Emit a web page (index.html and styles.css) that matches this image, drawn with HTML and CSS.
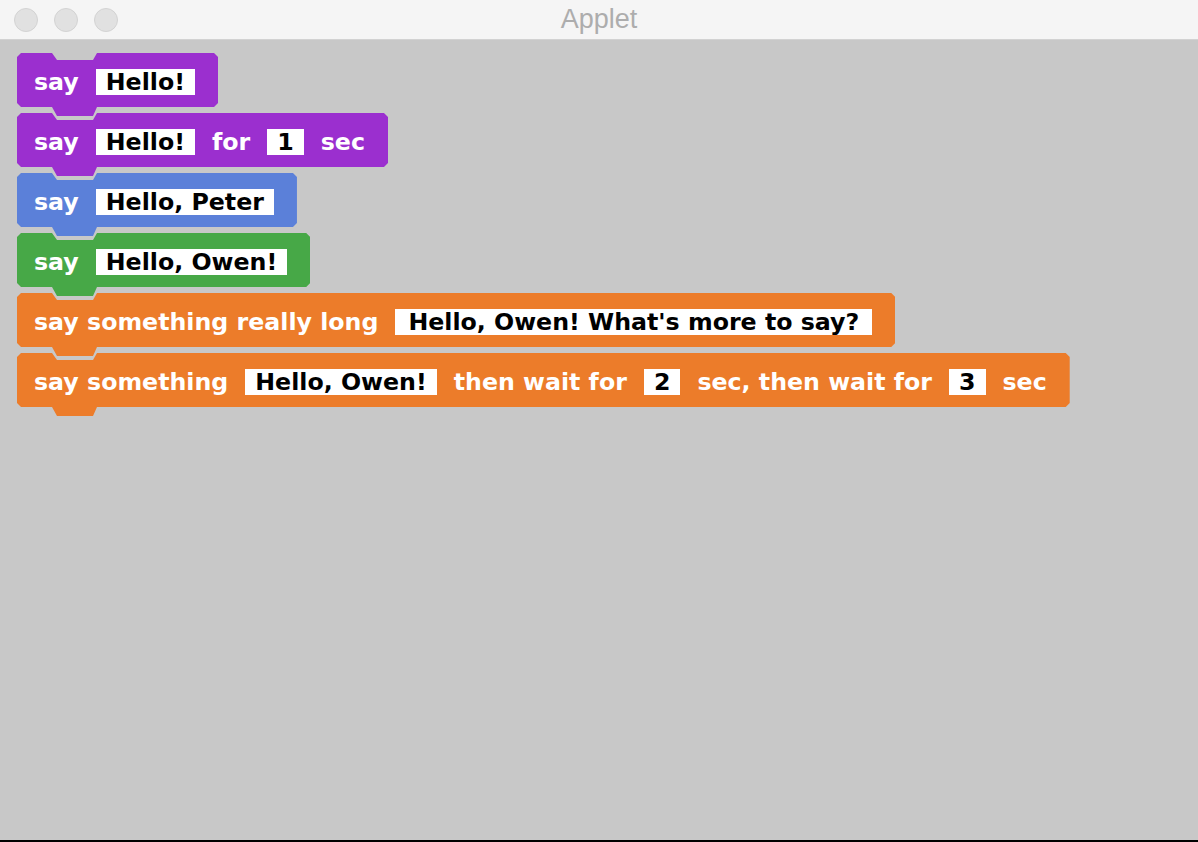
FILE: index.html
```html
<!DOCTYPE html>
<html>
<head>
<meta charset="utf-8">
<title>Applet</title>
<link rel="stylesheet" href="styles.css">
</head>
<body>
<div class="window">
  <div class="titlebar">
    <div class="lights"><span class="light"></span><span class="light"></span><span class="light"></span></div>
    <div class="title">Applet</div>
    <div class="spacer"></div>
  </div>
  <div class="canvas">
    <div class="block purple"><span class="lbl">say</span><span class="inp">Hello!</span></div>
    <div class="block purple"><span class="lbl">say</span><span class="inp">Hello!</span><span class="lbl">for</span><span class="inp">1</span><span class="lbl">sec</span></div>
    <div class="block blue"><span class="lbl">say</span><span class="inp">Hello, Peter</span></div>
    <div class="block green"><span class="lbl">say</span><span class="inp">Hello, Owen!</span></div>
    <div class="block orange"><span class="lbl">say something really long</span><span class="inp wide">Hello, Owen! What's more to say?</span></div>
    <div class="block orange"><span class="lbl">say something</span><span class="inp">Hello, Owen!</span><span class="lbl">then wait for</span><span class="inp">2</span><span class="lbl">sec, then wait for</span><span class="inp">3</span><span class="lbl">sec</span></div>
  </div>
</div>
</body>
</html>
```
FILE: styles.css
```css
html, body {
  margin: 0;
  padding: 0;
  width: 1198px;
  height: 842px;
  overflow: hidden;
}
.window {
  width: 1198px;
  height: 842px;
  display: flex;
  flex-direction: column;
  background: #c8c8c8;
  box-sizing: border-box;
  border-bottom: 2px solid #000;
}
.titlebar {
  height: 39px;
  flex: 0 0 39px;
  background: #f5f5f5;
  border-bottom: 1px solid #d2d2d2;
  display: grid;
  grid-template-columns: 1fr auto 1fr;
  align-items: center;
}
.lights {
  display: flex;
  gap: 16px;
  padding-left: 14px;
}
.light {
  width: 22px;
  height: 22px;
  border-radius: 50%;
  background: #e1e1e1;
  border: 1px solid #d3d3d3;
}
.title {
  font-family: "Liberation Sans", Arial, sans-serif;
  font-size: 27px;
  line-height: 39px;
  color: #adadad;
}
.canvas {
  flex: 1;
  padding: 13px 0 0 17px;
  display: flex;
  flex-direction: column;
  align-items: flex-start;
}
.block {
  display: flex;
  align-items: center;
  gap: 17px;
  height: 64px;
  box-sizing: border-box;
  padding: 0 23px 6px 17px;
  margin-bottom: -4px;
  font-family: "DejaVu Sans", Verdana, sans-serif;
  font-weight: bold;
  font-size: 23.7px;
  color: #fff;
  white-space: nowrap;
  clip-path: polygon(0 4px, 4px 0, 35px 0, 40px 7px, 76px 7px, 80px 0, calc(100% - 4px) 0, 100% 4px, 100% 50px, calc(100% - 4px) 54px, 80px 54px, 76px 63px, 40px 63px, 35px 54px, 4px 54px, 0 50px);
}
.purple { background: #9b2fcf; }
.blue { background: #5b80d9; }
.green { background: #47a847; }
.orange { background: #ec7c2a; }
.inp {
  background: #fff;
  color: #000;
  height: 26px;
  line-height: 26px;
  padding: 0 10px;
}
.inp.wide { padding: 0 13px; }
```
